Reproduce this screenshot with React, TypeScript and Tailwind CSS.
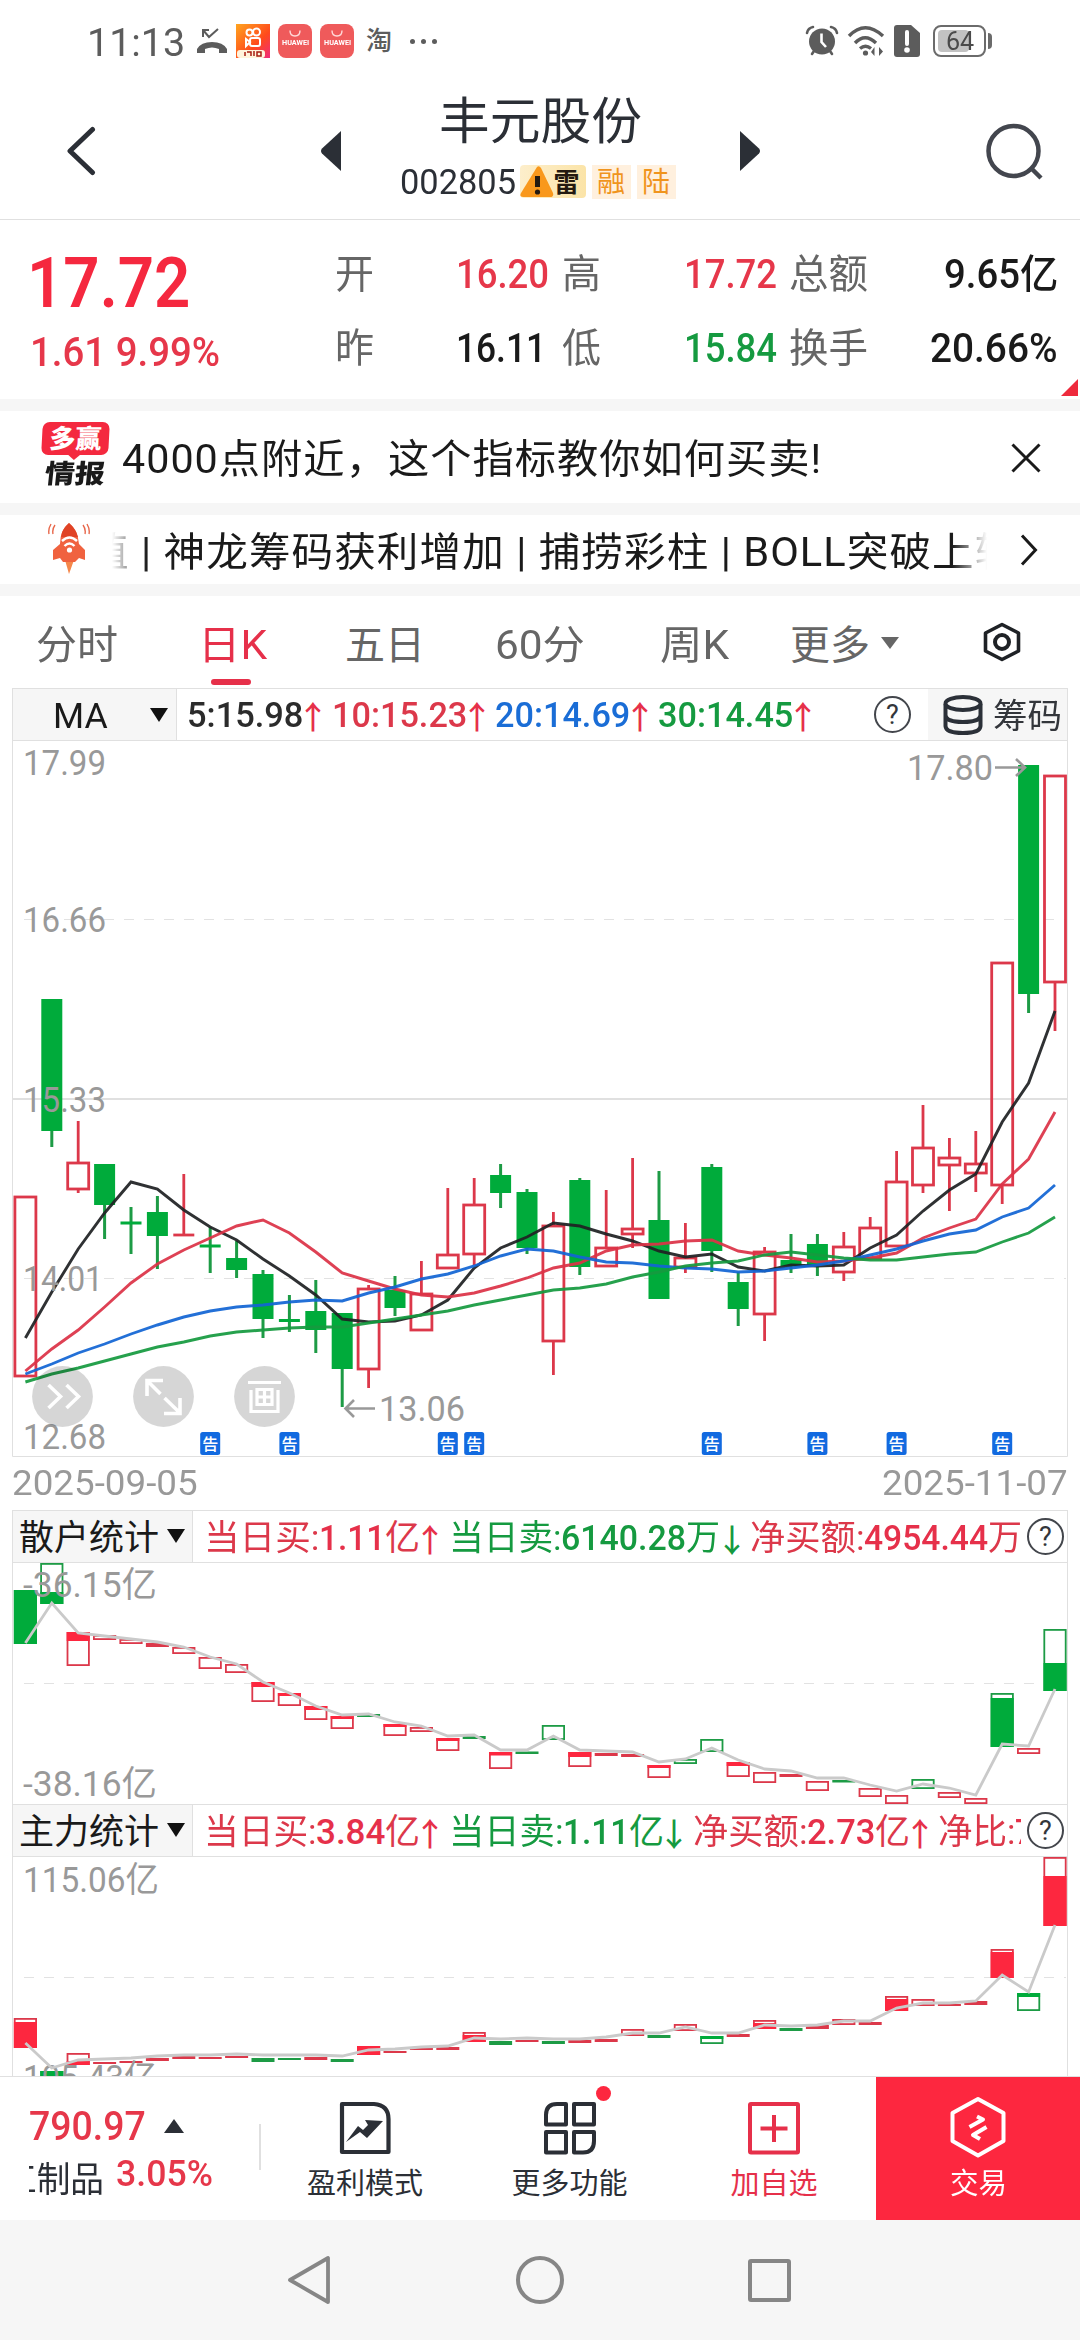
import React, { useLayoutEffect, useRef } from "react";

const RED = "#dc384a";
const RED_FILL = "#fd273f";
const GREEN = "#1d9b45";
const GREEN_FILL = "#00ab3b";

const FIRST_X = 25.4;
const STEP = 26.4;
const barX = (i: number) => FIRST_X + i * STEP;

interface FitProps {
  w: number;
  className?: string;
  children: React.ReactNode;
}

// Single line of text condensed or stretched to an exact width
const Fit: React.FC<FitProps> = ({ w, className = "", children }) => {
  const outer = useRef<HTMLSpanElement>(null);
  const inner = useRef<HTMLSpanElement>(null);

  useLayoutEffect(() => {
    if (!outer.current || !inner.current) return;
    const natural = inner.current.offsetWidth;
    inner.current.style.transform = `scaleX(${w / natural})`;
    outer.current.style.width = `${w}px`;
  }, [w, children]);

  return (
    <span ref={outer} className={`block shrink-0 leading-none whitespace-nowrap ${className}`}>
      <span ref={inner} className="inline-block origin-left leading-none">
        {children}
      </span>
    </span>
  );
};

type Candle = ["r" | "g", number, number, number, number];

// color, high, body top, body bottom, low
const candles: Candle[] = [
  ["r", 457, 457, 636, 636],
  ["g", 259, 259, 391, 407],
  ["r", 381, 423, 449, 453],
  ["g", 424, 424, 465, 499],
  ["g", 467, 481.5, 484.5, 514],
  ["g", 456, 472, 496, 529],
  ["r", 434, 495, 495, 496],
  ["g", 487, 504.5, 507.5, 533],
  ["g", 501, 518, 530, 538],
  ["g", 530, 534, 579, 598],
  ["g", 555, 579, 582, 592],
  ["g", 540, 571, 590, 613],
  ["g", 573, 573, 629, 667],
  ["r", 545, 549, 629, 648],
  ["g", 536, 550, 568, 576],
  ["r", 521, 554, 590, 590],
  ["r", 448, 515, 528, 528],
  ["r", 438, 465, 514, 525],
  ["g", 424, 435, 453, 468],
  ["g", 449, 452, 508, 514],
  ["r", 472, 486, 601, 635],
  ["g", 438, 440, 527, 535],
  ["r", 450, 508, 526, 526],
  ["r", 418, 489, 494, 508],
  ["g", 431, 480, 559, 559],
  ["r", 483, 518, 527, 533],
  ["g", 424, 427, 511, 532],
  ["g", 532, 542, 569, 586],
  ["r", 507, 512, 574, 601],
  ["g", 494, 520, 526, 533],
  ["g", 494, 504, 525, 536],
  ["r", 492, 507, 532, 541],
  ["r", 477, 488, 518, 518],
  ["r", 411, 442, 506, 506],
  ["r", 365, 408, 445, 453],
  ["r", 398, 418, 425, 471],
  ["r", 391, 424, 433, 452],
  ["r", 223, 223, 445, 464],
  ["g", 25, 25, 254, 273],
  ["r", 36, 36, 242, 291],
];

const averages = [
  {
    color: "#1f2123",
    points: [598, 552, 509, 473, 442, 449, 470, 487, 500, 519, 536, 555, 579, 582, 581, 575, 560, 528, 508, 497, 483, 486, 494, 501, 511, 517, 514, 527, 531, 525, 526, 525, 508, 495, 471, 450, 434, 382, 343, 271],
  },
  {
    color: "#dc3347",
    points: [631, 609, 590, 567, 543, 524, 510, 498, 486, 480, 493, 512, 533, 541, 549, 555, 557, 553, 546, 538, 528, 523, 511, 505, 504, 501, 500, 511, 515, 518, 522, 521, 518, 513, 498, 488, 479, 444, 419, 372],
  },
  {
    color: "#1265d4",
    points: [634, 624, 613, 604, 594, 585, 577, 571, 567, 565, 562, 560, 561, 553, 547, 539, 534, 526, 516, 509, 511, 517, 522, 523, 526, 528, 529, 532, 531, 528, 525, 521, 515, 509, 501, 494, 490, 477, 468, 445],
  },
  {
    color: "#159a40",
    points: [642, 634, 628, 621, 614, 607, 602, 596, 592, 590, 588, 587, 587, 583, 579, 575, 571, 565, 560, 555, 550, 548, 544, 537, 532, 526, 523, 521, 515, 512, 515, 518, 520, 520, 517, 514, 512, 502, 493, 477],
  },
];

const notices = [7, 10, 16, 17, 26, 30, 33, 37];

// color, top, bottom, filled from, filled to
type Flow = ["r" | "g", number, number, number, number];

const retailBars: Flow[] = [
  ["g", 28, 82, 28, 82], ["g", 1, 42, 30, 42], ["r", 70, 104, 70, 79], ["r", 73, 78, 0, 0],
  ["r", 77, 82, 0, 0], ["r", 81, 85, 0, 0], ["r", 85, 92, 0, 0], ["r", 95, 107, 0, 0],
  ["r", 102, 111, 0, 0], ["r", 120, 140, 120, 125], ["r", 131, 144, 131, 134], ["r", 144, 158, 144, 148],
  ["r", 154, 167, 154, 157], ["g", 152, 155, 152, 155], ["r", 162, 174, 162, 165], ["r", 165, 170, 0, 0],
  ["r", 176, 189, 176, 179], ["g", 174, 177, 174, 177], ["r", 190, 207, 190, 193.5], ["g", 189.5, 192, 189, 192],
  ["g", 163, 178, 0, 0], ["r", 190, 205, 190, 195], ["r", 191, 194, 191, 194], ["r", 192, 195, 192, 195],
  ["r", 203, 216, 203, 206], ["g", 197, 202, 0, 0], ["g", 177, 190, 0, 0], ["r", 200, 215, 200, 204],
  ["r", 210, 221, 0, 0], ["r", 212, 215, 212, 215], ["r", 219, 229, 0, 0], ["g", 218, 220.5, 218, 220],
  ["r", 226, 235, 0, 0], ["r", 233, 242, 0, 0], ["g", 217, 227, 0, 0], ["r", 230, 236, 0, 0],
  ["r", 236, 242, 0, 0], ["g", 131, 185, 136, 185], ["r", 186, 192, 0, 0], ["g", 67, 129, 101, 129],
];

const retailLine = [81, 41, 71, 74, 77, 80, 85, 95, 102, 120, 131, 144, 153, 152, 160, 164, 174, 173, 188, 188, 174, 188, 189, 190, 200, 197, 186, 198, 207, 209, 216, 216, 223, 229, 222, 226, 233, 182, 184, 127];

const mainBars: Flow[] = [
  ["r", 162, 192, 166, 192], ["g", 215, 225, 215, 225], ["r", 197, 209, 205, 209], ["r", 206, 208, 206, 208],
  ["r", 205, 207, 205, 207], ["r", 202, 205, 202, 205], ["r", 200, 203, 200, 203], ["r", 201, 203, 201, 203],
  ["r", 200, 202, 200, 202], ["g", 202, 206, 202, 206], ["g", 202, 204, 202, 204], ["r", 201, 204, 201, 204],
  ["g", 203, 206, 203, 206], ["r", 190, 199, 190, 199], ["r", 195, 197, 195, 197], ["r", 191, 194, 191, 194],
  ["r", 191, 194, 191, 194], ["r", 176, 186, 179, 186], ["g", 185, 189, 185, 189], ["r", 184, 186, 184, 186],
  ["g", 185, 188, 185, 188], ["r", 184, 187, 184, 187], ["r", 183, 186, 183, 186], ["r", 173, 180, 0, 0],
  ["g", 179, 182, 179, 182], ["r", 168, 175, 0, 0], ["g", 180, 188, 180, 183], ["r", 178, 181, 178, 181],
  ["r", 164, 173, 167, 173], ["g", 172, 175, 172, 175], ["r", 169, 173, 169, 173], ["r", 163, 169, 0, 0],
  ["r", 166, 169, 166, 169], ["r", 140, 155, 143, 155], ["r", 143, 150, 0, 0], ["r", 148, 150, 148, 150],
  ["r", 145, 149, 145, 149], ["r", 93, 122, 96, 122], ["g", 137, 155, 137, 141], ["r", 1, 70, 20, 70],
];

const mainLine = [187, 212, 204, 203, 202, 200, 199, 199, 198, 199, 199, 199, 200, 194, 193, 191, 190, 182, 183, 182, 183, 183, 181, 177, 177, 171, 177, 177, 169, 170, 169, 165, 165, 152, 147, 147, 145, 119, 136, 69];

const toPoints = (ys: number[]) => ys.map((y, i) => `${barX(i)},${y}`).join(" ");

interface AxisLabelProps {
  x?: number;
  y: number;
  w: number;
  children: string;
}

const AxisLabel: React.FC<AxisLabelProps> = ({ x = 23, y, w, children }) => (
  <text x={x} y={y} textLength={w} lengthAdjust="spacingAndGlyphs" fill="#999999" fontSize={35}>
    {children}
  </text>
);

const Dashes: React.FC<{ y: number }> = ({ y }) => (
  <line x1={24} x2={1066} y1={y} y2={y} stroke="#e2e2e2" strokeDasharray="10 10" />
);

const KLineChart: React.FC = () => (
  <svg viewBox="0 0 1080 717" className="block h-[717px] w-[1080px]">
    <path d="M12.5 0V716.5H1067.5V0" fill="none" stroke="#e0e0e0" />
    <Dashes y={179.5} />
    <line x1={12} x2={1067} y1={359} y2={359} stroke="#e0e0e0" strokeWidth={2} />
    <Dashes y={538.5} />
    {candles.map(([kind, high, top, bottom, low], i) => {
      const x = barX(i);
      if (kind === "g") {
        return (
          <g key={i} fill={GREEN_FILL}>
            <rect x={x - 1.5} y={high} width={3} height={low - high} fill={GREEN} />
            <rect x={x - 10.5} y={top} width={21} height={bottom - top} />
          </g>
        );
      }
      return (
        <g key={i} fill="none" stroke={RED} strokeWidth={2.8}>
          <path d={`M${x} ${high}V${top}M${x} ${bottom}V${low}`} />
          {bottom > top ? (
            <rect x={x - 10.5} y={top} width={21} height={bottom - top} />
          ) : (
            <path d={`M${x - 10.5} ${top}h21`} />
          )}
        </g>
      );
    })}
    {averages.map((line) => (
      <polyline key={line.color} points={toPoints(line.points)} fill="none" stroke={line.color} strokeWidth={2.9} opacity={0.93} />
    ))}
    <AxisLabel y={35} w={83}>17.99</AxisLabel>
    <AxisLabel y={192} w={83}>16.66</AxisLabel>
    <AxisLabel y={372} w={83}>15.33</AxisLabel>
    <AxisLabel y={551} w={80}>14.01</AxisLabel>
    <AxisLabel y={709} w={83}>12.68</AxisLabel>
    <AxisLabel x={907} y={40} w={86}>17.80</AxisLabel>
    <path d="M995 27.5H1025M1016 19L1025 27.5L1016 36" fill="none" stroke="#999999" strokeWidth={2.6} />
    <AxisLabel x={379} y={681} w={86}>13.06</AxisLabel>
    <path d="M375 668.5H346M354 660L345.5 668.5L354 677" fill="none" stroke="#999999" strokeWidth={2.6} />
    {notices.map((i) => (
      <g key={i}>
        <rect x={barX(i) - 10} y={692} width={20} height={23} rx={2.5} fill="#126ae0" />
        <text x={barX(i)} y={709.5} textAnchor="middle" fontSize={16} fontWeight={500} fill="#ffffff">
          告
        </text>
      </g>
    ))}
    {[62.5, 163.5, 264.5].map((cx) => (
      <circle key={cx} cx={cx} cy={656.5} r={30.4} fill="#000000" opacity={0.16} />
    ))}
    <g fill="none" stroke="#ffffff" strokeWidth={3.6}>
      <path d="M48.5 645L60.5 656.5L48.5 668M66.5 645L78.5 656.5L66.5 668" />
      <path d="M147 656V640.5H163M147.5 641L160.5 654M164.5 658L180 673M180 658V673.5H164" />
    </g>
    <g fill="none" stroke="#ffffff" strokeWidth={3.2}>
      <path d="M248 642.5H281M251 650V671.5H278V650" />
      <path d="M257 649.5H272V664.5H257ZM264.5 648V665M257 657H272" />
    </g>
  </svg>
);

interface FlowChartProps {
  bars: Flow[];
  line: number[];
  children: React.ReactNode;
  className: string;
  height: number;
}

const FlowChart: React.FC<FlowChartProps> = ({ bars, line, children, className, height }) => (
  <svg viewBox={`0 0 1080 ${height}`} className={`block w-[1080px] ${className}`}>
    <path d={`M12.5 0V${height}M1067.5 0V${height}`} stroke="#e0e0e0" />
    <Dashes y={121.5} />
    {bars.map(([kind, top, bottom, from, to], i) => {
      const stroke = kind === "g" ? GREEN : RED;
      const fill = kind === "g" ? GREEN_FILL : RED_FILL;
      const x = barX(i);
      if (bottom - top <= 4) {
        return <rect key={i} x={x - 11.5} y={top} width={23} height={bottom - top} fill={stroke} />;
      }
      return (
        <g key={i}>
          <rect x={x - 10.7} y={top + 0.9} width={21.4} height={bottom - top - 1.8} fill="none" stroke={stroke} strokeWidth={1.8} />
          {to > from && <rect x={x - 11.5} y={from} width={23} height={to - from} fill={fill} />}
        </g>
      );
    })}
    {children}
    <polyline points={toPoints(line)} fill="none" stroke="#cacaca" strokeWidth={2.8} />
  </svg>
);

const Arrow: React.FC<{ down?: boolean; className?: string }> = ({ down, className = "" }) => (
  <span className={`flex w-[20px] shrink-0 justify-center font-['Noto_Sans_CJK_SC'] text-[32px] leading-none font-medium ${className}`}>
    {down ? "↓" : "↑"}
  </span>
);

const Help: React.FC<{ className?: string }> = ({ className = "" }) => (
  <span className={`flex size-[37px] shrink-0 items-center justify-center rounded-full border-[2.5px] border-[#43464c] pt-px text-[27px] leading-none text-[#33363b] ${className}`}>
    ?
  </span>
);

const StatusBar: React.FC = () => (
  <div className="flex h-[82px] items-center pl-[87px] text-[#5c5c5c]">
    <Fit w={98} className="mt-1 text-[39px]">11:13</Fit>
    <svg viewBox="0 0 32 26" className="ml-[11px] h-[26px] w-8" fill="none" stroke="currentColor">
      <path d="M1 25V21Q5 14 16 14Q27 14 31 21V25H23V21Q16 18 9 21V25Z" fill="currentColor" stroke="none" />
      <path d="M7 9V2H13M7 2L13 9L22 1" strokeWidth={2} />
    </svg>
    <svg viewBox="0 0 34 34" className="ml-2 size-[34px]">
      <defs>
        <linearGradient id="kwai" x1="0" y1="0" x2="1" y2="1">
          <stop offset="0" stopColor="#ffa51f" />
          <stop offset="0.6" stopColor="#ff4a1c" />
          <stop offset="1" stopColor="#f02a7c" />
        </linearGradient>
      </defs>
      <rect width="34" height="34" fill="url(#kwai)" />
      <g fill="none" stroke="#ffffff" strokeWidth={2}>
        <circle cx="13.5" cy="8.5" r="3" />
        <circle cx="20.5" cy="8" r="3.5" />
        <rect x="14" y="14" width="10" height="8" rx="2" />
        <path d="M14 18L10 15V22Z" />
      </g>
      <rect x="1" y="26" width="28" height="8" rx="3" fill="#fff3dc" />
      <path d="M9 28V32M11 28H15V32M18 27V32M21 28H25V32H21Z" stroke="#a81c12" strokeWidth={1.5} fill="none" />
    </svg>
    {[0, 1].map((n) => (
      <div key={n} className="ml-2 flex h-[34px] w-[34px] flex-col items-center rounded-[8px] bg-[#ef5a5b]">
        <svg viewBox="0 0 12 8" className="mt-1.5 h-2 w-3" fill="none" stroke="#ffd9d9" strokeWidth={1.4}>
          <path d="M1 0.5Q1 6 6 6Q11 6 11 0.5" />
        </svg>
        <Fit w={27} className="mt-0.5 text-[7px] font-bold text-white">HUAWEI</Fit>
      </div>
    ))}
    <span className="ml-3 text-[26px] leading-none font-medium">淘</span>
    <div className="ml-[18px] flex gap-1.5">
      <span className="size-[5px] rounded-full bg-[#5c5c5c]" />
      <span className="size-[5px] rounded-full bg-[#5c5c5c]" />
      <span className="size-[5px] rounded-full bg-[#5c5c5c]" />
    </div>
    <svg viewBox="0 0 34 32" className="ml-auto h-8 w-[34px]">
      <circle cx="17" cy="16.5" r="13" fill="#5c5c5c" />
      <path d="M2 8Q3 3 8 2M32 8Q31 3 26 2M7 29L9 26M27 29L25 26" stroke="#5c5c5c" strokeWidth={2.6} fill="none" strokeLinecap="round" />
      <path d="M16.5 8.5V17L21 22" stroke="#ffffff" strokeWidth={2.6} fill="none" />
    </svg>
    <svg viewBox="0 0 38 32" className="ml-2 h-8 w-[38px]" fill="none" stroke="#5c5c5c" strokeWidth={3.4}>
      <path d="M2 11Q18 -5.5 36 11M8 18Q18 7.5 29 18M13 23.5Q18.5 19 24 23.5" />
      <circle cx="18.5" cy="28" r="2.6" fill="#5c5c5c" stroke="none" />
      <path d="M27.5 22V31L24 27ZM32 31V22L36 26.5Z" fill="#5c5c5c" stroke="none" />
    </svg>
    <svg viewBox="0 0 28 34" className="ml-2 h-[34px] w-7">
      <path d="M4 1H18L27 9V30Q27 33 24 33H4Q1 33 1 30V4Q1 1 4 1Z" fill="#5c5c5c" />
      <path d="M14 8V20" stroke="#ffffff" strokeWidth={4} strokeLinecap="round" />
      <circle cx="14" cy="26" r="2.8" fill="#ffffff" />
    </svg>
    <div className="ml-3 flex h-8 w-[53px] rounded-[8px] border-[2.5px] border-[#6b6b6b] p-[3px]">
      <div className="flex h-full w-[31px] items-center rounded-[4px] bg-[#c2c2c2] pl-2">
        <Fit w={28} className="text-[26px] text-[#4a4a4a]">64</Fit>
      </div>
    </div>
    <span className="mr-[88px] ml-0.5 h-4 w-1 rounded-r bg-[#6b6b6b]" />
  </div>
);

const Header: React.FC = () => (
  <div className="flex h-[138px] items-start border-b border-[#e0e0e0] text-[#2b2f36]">
    <svg viewBox="0 0 30 50" className="mt-11 ml-[66px] h-[50px] w-[30px] shrink-0" fill="none" stroke="currentColor" strokeWidth={5} strokeLinecap="round" strokeLinejoin="round">
      <path d="M26.5 3.5L4 25L26.5 46.5" />
    </svg>
    <svg viewBox="0 0 21 40" className="mt-[49px] ml-[225px] h-10 w-[21px] shrink-0" fill="currentColor">
      <path d="M20 0V40L1 22.5Q-1 20 1 17.5Z" />
    </svg>
    <div className="flex w-[397px] flex-col items-center">
      <Fit w={203} className="mt-[15px] text-[50px]">丰元股份</Fit>
      <div className="mt-4 -ml-1 flex w-[278px] items-center">
        <Fit w={116} className="mt-0.5 text-[35px]">002805</Fit>
        <div className="ml-1 flex h-[33px] w-[66px] items-center rounded-sm bg-linear-to-r from-[#fdeecb] to-[#fbe4a8]">
          <svg viewBox="0 0 34 33" className="h-[33px] w-[34px]">
            <path d="M17 2Q19 0 21 3L33 28Q34 32 30 32H3Q-1 32 1 28Z" fill="#f9981c" />
            <path d="M17.5 11V22" stroke="#241a10" strokeWidth={5} />
            <circle cx="17.5" cy="27" r="2.6" fill="#241a10" />
          </svg>
          <span className="pt-0.5 text-[26px] leading-none font-bold text-[#241a10]">雷</span>
        </div>
        <span className="ml-1.5 flex h-[34px] w-[39px] items-center justify-center bg-[#fff0de] pt-0.5 text-[28px] leading-none text-[#f0941d]">融</span>
        <span className="ml-1.5 flex h-[34px] w-[39px] items-center justify-center bg-[#fff0de] pt-0.5 text-[28px] leading-none text-[#f0941d]">陆</span>
      </div>
    </div>
    <svg viewBox="0 0 21 40" className="mt-[49px] h-10 w-[21px] shrink-0" fill="currentColor">
      <path d="M1 0V40L20 22.5Q22 20 20 17.5Z" />
    </svg>
    <svg viewBox="0 0 60 60" className="mt-10 ml-[225px] size-[60px] shrink-0" fill="none" stroke="#43464e" strokeWidth={4.5}>
      <circle cx="28.5" cy="29" r="25" />
      <path d="M46 46L56 56" />
    </svg>
  </div>
);

const Quote: React.FC = () => (
  <div className="flex h-[179px] pl-[27px]">
    <div className="w-[308px] font-medium text-[#f5283f]">
      <Fit w={163} className="mt-[27px] text-[71px] font-semibold">17.72</Fit>
      <Fit w={190} className="mt-[15px] ml-[3px] text-[40px] text-[#e6374a]">1.61 9.99%</Fit>
    </div>
    <div className="flex flex-col gap-[34px] pt-[35px] text-[40px]">
      <div className="flex h-10 items-center">
        <Fit w={39} className="text-[#666666]">开</Fit>
        <Fit w={93} className="ml-[82px] font-medium text-[#e6374a]">16.20</Fit>
        <Fit w={39} className="ml-[13px] text-[#666666]">高</Fit>
        <Fit w={93} className="ml-[83px] font-medium text-[#e6374a]">17.72</Fit>
        <Fit w={79} className="ml-3 text-[#666666]">总额</Fit>
        <Fit w={114} className="ml-[76px] font-medium text-[#1a1a1a]">9.65亿</Fit>
      </div>
      <div className="flex h-10 items-center">
        <Fit w={39} className="text-[#666666]">昨</Fit>
        <Fit w={90} className="ml-[82px] font-medium text-[#1a1a1a]">16.11</Fit>
        <Fit w={39} className="ml-4 text-[#666666]">低</Fit>
        <Fit w={93} className="ml-[83px] font-medium text-[#159a40]">15.84</Fit>
        <Fit w={79} className="ml-3 text-[#666666]">换手</Fit>
        <Fit w={128} className="ml-[62px] font-medium text-[#1a1a1a]">20.66%</Fit>
      </div>
    </div>
    <svg viewBox="0 0 17 17" className="mt-[159px] ml-[3px] size-[17px]">
      <path d="M17 0V17H0Z" fill="#ee2a3c" />
    </svg>
  </div>
);

const Banner: React.FC = () => (
  <div className="flex h-[92px] items-center pl-[41px] text-[#1a1a1a]">
    <div className="-mt-1.5 flex w-[68px] flex-col items-center">
      <div className="relative flex h-[33px] w-[67px] -skew-x-3 items-center justify-center rounded-[7px] bg-[#f4293f]">
        <Fit w={52} className="text-[26px] font-black text-white">多赢</Fit>
        <svg viewBox="0 0 14 6" className="absolute top-[32px] left-[26px] h-1.5 w-3.5">
          <path d="M0 0H14L7 6Z" fill="#f4293f" />
        </svg>
      </div>
      <Fit w={60} className="mt-1.5 -skew-x-6 text-[26px] font-black">情报</Fit>
    </div>
    <Fit w={700} className="mt-1.5 ml-[13px] text-[40px] tracking-[1px]">4000点附近，这个指标教你如何买卖!</Fit>
    <svg viewBox="0 0 32 32" className="mt-0.5 ml-[188px] size-8" fill="none" stroke="currentColor" strokeWidth={3}>
      <path d="M2.5 2.5L29.5 29.5M29.5 2.5L2.5 29.5" />
    </svg>
  </div>
);

const Signals: React.FC = () => (
  <div className="flex h-[69px] items-center pl-12 text-[#1a1a1a]">
    <svg viewBox="0 0 42 52" className="-mt-1 h-[52px] w-[42px] shrink-0">
      <path d="M17 38L21 52L26 38Z" fill="#f5874a" />
      <path d="M21 1Q12 8 12 22L5 28V38L12 36L15 40H27L31 36L37 38V28L31 22Q30 8 21 1Z" fill="#f0623f" />
      <path d="M21 1Q14 7 13 15H30Q28 7 21 1Z" fill="#e04326" />
      <path d="M14 19Q21.5 12 29 19M16.5 24Q21.5 19 26.5 24" stroke="#ffffff" strokeWidth={2.4} fill="none" />
      <circle cx="21.5" cy="28" r="2.6" fill="#ffffff" />
      <path d="M7 3Q4 7 5 12M3 2Q0 7 1 12M35 3Q38 7 37 12M39 2Q42 7 41 12" stroke="#e8674a" strokeWidth={1.4} fill="none" />
    </svg>
    <div className="ml-[22px] flex h-full w-[875px] items-center overflow-hidden pt-[7px] mask-[linear-gradient(to_right,transparent,black_4%,black_96%,transparent)]">
      <Fit w={930} className="-ml-[25px] text-[40px] tracking-[1px]">值 | 神龙筹码获利增加 | 捕捞彩柱 | BOLL突破上轨</Fit>
    </div>
    <svg viewBox="0 0 18 32" className="ml-[33px] h-8 w-[18px]" fill="none" stroke="currentColor" strokeWidth={3}>
      <path d="M2 1.5L15.5 16L2 30.5" />
    </svg>
  </div>
);

const Tabs: React.FC = () => (
  <div className="flex h-[92px] items-start pt-[30px] pl-[36px] text-[40px] text-[#666666]">
    <Fit w={82}>分时</Fit>
    <div className="ml-20 flex w-[69px] flex-col items-center text-[#e6304a]">
      <Fit w={69}>日K</Fit>
      <span className="mt-[13px] mr-1 h-1.5 w-10 rounded-full bg-[#e6304a]" />
    </div>
    <Fit w={80} className="ml-[78px]">五日</Fit>
    <Fit w={90} className="ml-[70px]">60分</Fit>
    <Fit w={69} className="ml-[75px]">周K</Fit>
    <Fit w={80} className="ml-[61px]">更多</Fit>
    <svg viewBox="0 0 18 12" className="mt-[11px] ml-[11px] h-3 w-[18px]">
      <path d="M0 0H18L9 12Z" fill="#666666" />
    </svg>
    <svg viewBox="0 0 38 40" className="-mt-1 ml-[84px] h-10 w-[38px]" fill="none" stroke="#1f2226" strokeWidth={3.6}>
      <path d="M19 2.5L35.5 11V29L19 37.5L2.5 29V11Z" strokeLinejoin="round" />
      <circle cx="19" cy="20" r="7" strokeWidth={4} />
    </svg>
  </div>
);

const MaBar: React.FC = () => (
  <div className="mr-3 ml-3 flex h-[53px] items-center border border-[#e0e0e0] text-[35px]">
    <div className="flex h-full w-[164px] items-center border-r border-[#e0e0e0] bg-[#f6f6f6] text-[#1a1a1a]">
      <Fit w={55} className="mt-1 ml-10">MA</Fit>
      <svg viewBox="0 0 18 14" className="ml-[42px] h-3.5 w-[18px]">
        <path d="M0 0H18L9 14Z" fill="#111111" />
      </svg>
    </div>
    <Fit w={116} className="mt-0.5 ml-2.5 font-medium text-[#2b2b2b]">5:15.98</Fit>
    <Arrow className="text-[#e6304a]" />
    <Fit w={135} className="mt-0.5 ml-[9px] font-medium text-[#dc384a]">10:15.23</Fit>
    <Arrow className="text-[#e6304a]" />
    <Fit w={135} className="mt-0.5 ml-2 font-medium text-[#1a6dd6]">20:14.69</Fit>
    <Arrow className="text-[#e6304a]" />
    <Fit w={135} className="mt-0.5 ml-2 font-medium text-[#159a40]">30:14.45</Fit>
    <Arrow className="text-[#e6304a]" />
    <Help className="ml-[61px]" />
    <div className="ml-auto flex h-full w-[139px] items-center bg-[#f6f6f6] pl-[15px] text-[#33363b]">
      <svg viewBox="0 0 40 40" className="h-10 w-10 shrink-0" fill="none" stroke="#2b3038" strokeWidth={4}>
        <ellipse cx="20" cy="8.5" rx="17.5" ry="6.5" />
        <path d="M2.5 9V31Q3 38 20 38Q37 38 37.5 31V9M2.5 20Q3 27 20 27Q37 27 37.5 20" />
      </svg>
      <Fit w={69} className="mt-0.5 ml-[10px] text-[34px]">筹码</Fit>
    </div>
  </div>
);

interface FlowBarProps {
  title: string;
  children: React.ReactNode;
}

const FlowBar: React.FC<FlowBarProps> = ({ title, children }) => (
  <div className="mr-3 ml-3 flex h-[53px] items-center border border-[#e0e0e0] text-[35px]">
    <div className="flex h-full w-[180px] shrink-0 items-center border-r border-[#e0e0e0] bg-[#f6f6f6] text-[#1a1a1a]">
      <Fit w={140} className="mt-[3px] ml-1.5">{title}</Fit>
      <svg viewBox="0 0 18 14" className="-mt-0.5 ml-2 h-3.5 w-[18px]">
        <path d="M0 0H18L9 14Z" fill="#111111" />
      </svg>
    </div>
    <div className="flex h-full w-[828px] shrink-0 items-center overflow-hidden pt-[3px] pl-[11px]">{children}</div>
    <Help className="ml-1.5" />
  </div>
);

const BottomBar: React.FC = () => (
  <div className="flex h-[144px] border-t border-[#e0e0e0] bg-white text-[#2b2f36]">
    <div className="w-[259px] pt-[29px] pl-[29px]">
      <div className="flex h-[42px] items-center">
        <Fit w={117} className="text-[40px] font-medium text-[#e6374a]">790.97</Fit>
        <svg viewBox="0 0 20 14" className="-mt-0.5 ml-[18px] h-3.5 w-5">
          <path d="M0 14H20L10 0Z" fill="#2b2f36" />
        </svg>
      </div>
      <div className="mt-1 flex h-[50px] items-center">
        <div className="flex h-full w-[75px] items-center justify-end overflow-hidden pt-1.5">
          <Fit w={101} className="text-[35px]">工制品</Fit>
        </div>
        <Fit w={97} className="-mt-1.5 ml-3 text-[36px] font-medium text-[#e6374a]">3.05%</Fit>
      </div>
    </div>
    <span className="mt-[47px] h-[46px] w-0.5 bg-[#e0e0e0]" />
    <div className="ml-[46px] flex w-[116px] flex-col items-center pt-6">
      <svg viewBox="0 0 54 54" className="size-[54px]" fill="none" stroke="currentColor" strokeWidth={4.2} strokeLinejoin="round">
        <path d="M4 3H36Q50.5 4 50.5 18V51H4Z" />
        <path d="M8 41L20 25L25 29L30 24L27 19L45 20L29 37L22 31Z" fill="currentColor" stroke="none" />
      </svg>
      <Fit w={116} className="mt-[15px] text-[29px]">盈利模式</Fit>
    </div>
    <div className="relative ml-[88px] flex w-[117px] flex-col items-center pt-6">
      <svg viewBox="0 0 54 54" className="size-[54px]" fill="none" stroke="currentColor" strokeWidth={4} strokeLinejoin="round">
        <path d="M14 3H23V23.5H3V14Q3 3 14 3ZM31 3H51V23.5H31ZM3 31H23V51.5H3ZM31 31H51V40Q51 51.5 40 51.5H31Z" />
      </svg>
      <span className="absolute top-[9px] right-[17px] size-[15px] rounded-full bg-[#fd273f]" />
      <Fit w={116} className="mt-[15px] text-[29px]">更多功能</Fit>
    </div>
    <div className="ml-[102px] flex w-[88px] flex-col items-center pt-6 text-[#e6304a]">
      <svg viewBox="0 0 54 54" className="size-[54px]" fill="none" stroke="currentColor" strokeWidth={4}>
        <rect x="3" y="3" width="48" height="48.5" rx="1" />
        <path d="M27 14V41M13.5 27.5H40.5" />
      </svg>
      <Fit w={87} className="mt-[15px] text-[29px]">加自选</Fit>
    </div>
    <div className="ml-auto flex w-[204px] flex-col items-center bg-[#fd273f] pt-[19px] text-white">
      <svg viewBox="0 0 56 62" className="h-[62px] w-14" fill="none" stroke="currentColor" strokeWidth={4} strokeLinejoin="round">
        <path d="M28 3L53.5 17V45L28 59.5L2.5 45V17Z" />
        <path d="M19.5 31L33 23.5L27 20.5M36.5 31L23 39L30 43" />
      </svg>
      <Fit w={57} className="mt-3 text-[29px]">交易</Fit>
    </div>
  </div>
);

const NavBar: React.FC = () => (
  <div className="flex h-[120px] items-center bg-[#f6f6f6] pl-[286px]">
    <svg viewBox="0 0 46 50" className="h-[50px] w-[46px]" fill="none" stroke="#868686" strokeWidth={3.8} strokeLinejoin="round">
      <path d="M42 3V47L4 25Z" />
    </svg>
    <span className="ml-[184px] size-12 rounded-full border-4 border-[#868686]" />
    <span className="ml-[184px] size-[43px] rounded-[3px] border-4 border-[#868686]" />
  </div>
);

const Band: React.FC = () => <div className="h-3 bg-[#f6f6f6]" />;

const App: React.FC = () => (
  <div className="h-[2340px] w-[1080px] overflow-hidden bg-white font-['Roboto','Noto_Sans_CJK_SC',sans-serif]">
    <StatusBar />
    <Header />
    <Quote />
    <Band />
    <Banner />
    <Band />
    <Signals />
    <Band />
    <Tabs />
    <MaBar />
    <div className="-mt-px">
      <KLineChart />
    </div>
    <div className="mr-3 ml-3 flex h-[53px] items-center justify-between text-[35px] text-[#999999]">
      <Fit w={186}>2025-09-05</Fit>
      <Fit w={186}>2025-11-07</Fit>
    </div>
    <FlowBar title="散户统计">
      <Fit w={115} className="text-[#dc384a]">当日买:</Fit>
      <Fit w={66} className="font-medium text-[#e6304a]">1.11</Fit>
      <Fit w={35} className="text-[#dc384a]">亿</Fit>
      <Arrow className="text-[#e6304a]" />
      <Fit w={112} className="ml-[9px] text-[#159a40]">当日卖:</Fit>
      <Fit w={125} className="font-medium text-[#159a40]">6140.28</Fit>
      <Fit w={34} className="text-[#159a40]">万</Fit>
      <Arrow down className="ml-0.5 text-[#159a40]" />
      <Fit w={114} className="ml-2 text-[#dc384a]">净买额:</Fit>
      <Fit w={124} className="font-medium text-[#e6304a]">4954.44</Fit>
      <Fit w={34} className="text-[#dc384a]">万</Fit>
    </FlowBar>
    <div className="-mt-px">
      <FlowChart bars={retailBars} line={retailLine} height={242} className="h-[242px]">
        <AxisLabel y={35} w={134}>-36.15亿</AxisLabel>
        <AxisLabel y={234} w={134}>-38.16亿</AxisLabel>
      </FlowChart>
    </div>
    <FlowBar title="主力统计">
      <Fit w={112} className="text-[#dc384a]">当日买:</Fit>
      <Fit w={69} className="font-medium text-[#e6304a]">3.84</Fit>
      <Fit w={35} className="text-[#dc384a]">亿</Fit>
      <Arrow className="text-[#e6304a]" />
      <Fit w={114} className="ml-[9px] text-[#159a40]">当日卖:</Fit>
      <Fit w={66} className="font-medium text-[#159a40]">1.11</Fit>
      <Fit w={35} className="text-[#159a40]">亿</Fit>
      <Arrow down className="text-[#159a40]" />
      <Fit w={114} className="ml-[9px] text-[#dc384a]">净买额:</Fit>
      <Fit w={68} className="font-medium text-[#e6304a]">2.73</Fit>
      <Fit w={35} className="text-[#dc384a]">亿</Fit>
      <Arrow className="text-[#e6304a]" />
      <Fit w={77} className="ml-2 text-[#dc384a]">净比:</Fit>
      <Fit w={18} className="font-medium text-[#e6304a]">7</Fit>
    </FlowBar>
    <div className="-mt-px h-[220px] overflow-hidden">
      <FlowChart bars={mainBars} line={mainLine} height={242} className="h-[242px]">
        <AxisLabel y={36} w={136}>115.06亿</AxisLabel>
        <AxisLabel y={234} w={134}>105.43亿</AxisLabel>
      </FlowChart>
    </div>
    <BottomBar />
    <NavBar />
  </div>
);

export default App;
